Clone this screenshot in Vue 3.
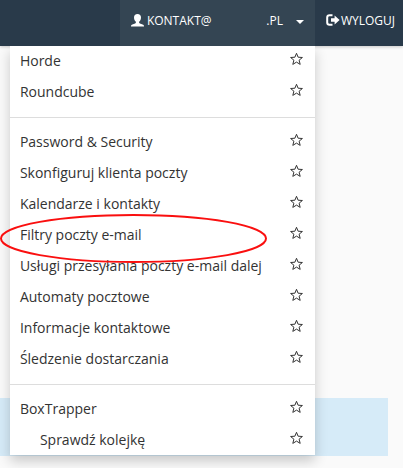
<script setup>
import { ref } from 'vue'

const open = ref(true)
const groups = [
  [{ label: 'Horde' }, { label: 'Roundcube' }],
  [
    { label: 'Password & Security' },
    { label: 'Skonfiguruj klienta poczty' },
    { label: 'Kalendarze i kontakty' },
    { label: 'Filtry poczty e-mail', marked: true },
    { label: 'Usługi przesyłania poczty e-mail dalej' },
    { label: 'Automaty pocztowe' },
    { label: 'Informacje kontaktowe' },
    { label: 'Śledzenie dostarczania' },
  ],
  [{ label: 'BoxTrapper' }, { label: 'Sprawdź kolejkę', nested: true }],
]
</script>

<template>
  <div class="page">
    <header class="bar">
      <div class="account">
        <button class="toggle" type="button" :aria-expanded="open" @click="open = !open">
          <svg class="user" viewBox="0 0 13 13" aria-hidden="true">
            <path d="M6.500 0C4.300 0 3 1.400 3 3.400c0 1.900.7 3.400 1.900 4.300v.8c0 .4-.3.7-.8.9L1.400 10.400C.5 10.800 0 11.200 0 12.100V12.500h13v-.4c0-.9-.5-1.300-1.400-1.700L8.900 9.400c-.5-.2-.8-.5-.8-.9v-.8C9.300 6.800 10 5.300 10 3.400 10 1.400 8.700 0 6.500 0z" />
          </svg>
          <span class="name">KONTAKT@</span>
          <span class="domain">.PL</span>
          <span class="caret"></span>
        </button>
        <nav v-if="open" class="menu">
          <ul v-for="(group, g) in groups" :key="g" class="group">
            <li v-for="item in group" :key="item.label" class="row" :class="{ nested: item.nested }">
              <a href="#" class="link">{{ item.label }}</a>
              <button class="star" type="button" :aria-label="'Ulubione: ' + item.label">
                <svg viewBox="0 0 14 14" aria-hidden="true">
                  <path d="M7.500 1.300L9.100 5.200L13.400 5.500L10.100 8.200L11.200 12.400L7.500 10.100L3.800 12.400L4.900 8.200L1.600 5.500L5.900 5.200Z" />
                </svg>
              </button>
              <svg v-if="item.marked" class="ring" viewBox="0 0 268 50" aria-hidden="true">
                <ellipse cx="133.500" cy="25.500" rx="132.500" ry="23.500" />
              </svg>
            </li>
          </ul>
        </nav>
      </div>
      <a href="#" class="logout">
        <svg viewBox="0 0 14 12" aria-hidden="true">
          <path class="door" d="M6.500 1.200H3.600C2 1.200 1.200 2 1.200 3.500V8.500C1.200 10 2 10.800 3.600 10.800H6.500" />
          <path class="arrow" d="M5 4.200H8.600V1.600L13.600 6L8.600 10.400V7.800H5Z" />
        </svg>
        <span>WYLOGUJ</span>
      </a>
    </header>
    <main class="content">
      <div class="notice"></div>
    </main>
  </div>
</template>

<style>
body {
  background: #fafafa;
}
</style>

<style scoped>
.page {
  min-height: 100vh;
  display: flex;
  flex-direction: column;
  font-family: "Open Sans", "Noto Sans", sans-serif;
  font-size: 14px;
  color: #333;
}
.bar {
  display: flex;
  justify-content: flex-end;
  height: 46px;
  background: #293a4a;
  box-shadow: 0 1px 3px rgba(0, 0, 0, 0.2);
}
.account {
  position: relative;
  display: flex;
}
.toggle {
  display: flex;
  align-items: center;
  width: 195px;
  padding: 0 11px 6px;
  border: 0;
  background: #344553;
  color: #fff;
  font: inherit;
  font-size: 12px;
}
.user {
  width: 13px;
  height: 13px;
  margin-right: 3px;
  fill: #fff;
}
.domain {
  margin-left: auto;
}
.caret {
  margin: 3px 0 0 13px;
  border: 4px solid transparent;
  border-top-color: #fff;
  border-bottom: 0;
}
.logout {
  display: flex;
  align-items: center;
  gap: 1px;
  padding: 0 8px 6px 11px;
  color: #fff;
  font-size: 12px;
  text-decoration: none;
}
.logout svg {
  width: 14px;
  height: 12px;
}
.door {
  fill: none;
  stroke: #fff;
  stroke-width: 2;
}
.arrow {
  fill: #fff;
}
.menu {
  position: absolute;
  top: 100%;
  right: 0;
  z-index: 1;
  width: 305px;
  background: #fff;
  box-shadow: 0 6px 12px rgba(0, 0, 0, 0.2);
  clip-path: inset(0 -20px -20px -20px);
}
.group {
  margin: -1px 0 0;
  padding: 0;
  list-style: none;
}
.group + .group {
  margin-top: 10px;
  padding-top: 8px;
  border-top: 1px solid #ddd;
}
.row {
  position: relative;
  display: flex;
  align-items: center;
  justify-content: space-between;
  height: 31px;
  padding: 0 12px 0 10px;
}
.nested {
  padding-left: 30px;
}
.link {
  color: #333;
  line-height: 20px;
  text-decoration: none;
}
.star {
  display: flex;
  padding: 0 0 3px;
  border: 0;
  background: none;
}
.star svg {
  width: 14px;
  height: 14px;
  fill: none;
  stroke: #333;
  stroke-width: 1;
}
.ring {
  position: absolute;
  left: -10px;
  top: -6px;
  z-index: 1;
  width: 268px;
  height: 50px;
  fill: none;
  stroke: #fa0f0f;
  stroke-width: 2;
  pointer-events: none;
}
.content {
  flex: 1;
  display: flex;
  flex-direction: column;
  justify-content: flex-end;
  padding: 0 15px 12px 0;
}
.notice {
  height: 58px;
  background: #d6ebf8;
}
</style>
